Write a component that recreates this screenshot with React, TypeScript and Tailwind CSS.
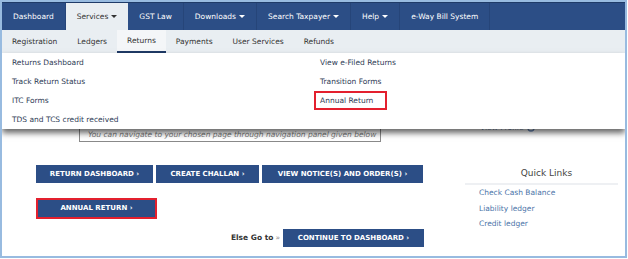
import React from "react";

const topNav = [
  { label: "Dashboard" },
  { label: "Services", caret: true, active: true },
  { label: "GST Law" },
  { label: "Downloads", caret: true },
  { label: "Search Taxpayer", caret: true },
  { label: "Help", caret: true },
  { label: "e-Way Bill System" },
];

const subNav = ["Registration", "Ledgers", "Returns", "Payments", "User Services", "Refunds"];

const leftMenu = ["Returns Dashboard", "Track Return Status", "ITC Forms", "TDS and TCS credit received"];

function Caret() {
  return (
    <span className="ml-[3px] inline-block h-0 w-0 border-x-[3px] border-t-[3px] border-x-transparent border-t-current align-middle" />
  );
}

function NavButton({ label, width }: { label: string; width: string }) {
  return (
    <button className={`${width} flex h-[18px] items-center justify-center bg-[#2c4e86] text-[7px] font-bold text-white`}>
      {label} ›
    </button>
  );
}

export default function App() {
  return (
    <div className="h-[258px] w-[627px] overflow-hidden border-2 border-[#98bbe0] bg-white font-['DejaVu_Sans',sans-serif] text-[7.5px]">
      {/* top navigation */}
      <nav className="flex h-[28px] border-t border-[#1f3b68] bg-[#2c4e86] text-white">
        {topNav.map((item) => (
          <div
            key={item.label}
            className={
              item.active
                ? "flex items-center bg-[#e9eef2] px-[11px] text-[#333]"
                : "flex items-center border-r border-[#264579] px-[11px]"
            }
          >
            {item.label}
            {item.caret ? <Caret /> : null}
          </div>
        ))}
      </nav>

      {/* sub navigation */}
      <div className="flex h-[23px] bg-[#e9eef2] text-[#333]">
        {subNav.map((s) => (
          <div
            key={s}
            className={
              s === "Returns"
                ? "flex items-center border-b-2 border-[#1f3a66] bg-[#f4f6f8] px-[10px]"
                : "flex items-center px-[10px]"
            }
          >
            {s}
          </div>
        ))}
      </div>

      <div className="relative">
        {/* open dropdown */}
        <div className="absolute left-0 right-0 top-0 z-10 flex h-[76px] bg-white text-[#2e3b55] shadow-[0_4px_6px_rgba(0,0,0,0.6)]">
          <div className="w-[312px] pl-[10px]">
            {leftMenu.map((m) => (
              <div key={m} className="flex h-[19px] items-center">
                {m}
              </div>
            ))}
          </div>
          <div>
            <div className="flex h-[19px] items-center pl-[6px]">View e-Filed Returns</div>
            <div className="flex h-[19px] items-center pl-[6px]">Transition Forms</div>
            <div className="flex h-[19px] w-[73px] items-center border-2 border-[#e3202e] pl-[4px]">Annual Return</div>
          </div>
        </div>

        {/* page content */}
        <div className="flex">
          <div className="ml-[34px] w-[388px]">
            <div className="ml-[43px] mt-[67px] flex h-[22px] w-[302px] items-end border border-[#8a8a8a] pb-[1px] pl-[8px] italic text-[#777]">
              You can navigate to your chosen page through navigation panel given below
            </div>
            <div className="mt-[23px] flex gap-[3px]">
              <NavButton label="RETURN DASHBOARD" width="w-[117px]" />
              <NavButton label="CREATE CHALLAN" width="w-[103px]" />
              <NavButton label="VIEW NOTICE(S) AND ORDER(S)" width="w-[161px]" />
            </div>
            <div className="mt-[15px] flex h-[21px] w-[121px] border-2 border-[#e3202e]">
              <div className="flex flex-1 items-center justify-center bg-[#2c4e86] text-[7px] font-bold text-white">
                ANNUAL RETURN ›
              </div>
            </div>
            <div className="mt-[10px] flex items-center justify-end">
              <span className="font-bold text-[#333]">Else Go to</span>
              <span className="ml-[2px] mr-[3px] text-[#888]">»</span>
              <NavButton label="CONTINUE TO DASHBOARD" width="w-[141px]" />
            </div>
          </div>

          <div className="ml-[41px] w-[153px]">
            <div className="mt-[69px] flex h-[12px] items-center pl-[15px] text-[#7d95b8]">
              View Profile
              <svg className="ml-[3px]" width="8" height="8" viewBox="0 0 8 8">
                <circle cx="4" cy="4" r="3" fill="none" stroke="#6f8fbf" strokeWidth="1.4" />
              </svg>
            </div>
            <div className="mt-[32px] flex h-[19px] items-start justify-center border-b-2 border-[#eef0f3] pl-[10px] pt-[1px] text-[9px] text-[#444]">
              Quick Links
            </div>
            <div className="pl-[14px] text-[#4b74a8]">
              <div className="flex h-[15.5px] items-center">Check Cash Balance</div>
              <div className="flex h-[15.5px] items-center">Liability ledger</div>
              <div className="flex h-[15.5px] items-center">Credit ledger</div>
            </div>
          </div>
        </div>
      </div>
    </div>
  );
}
